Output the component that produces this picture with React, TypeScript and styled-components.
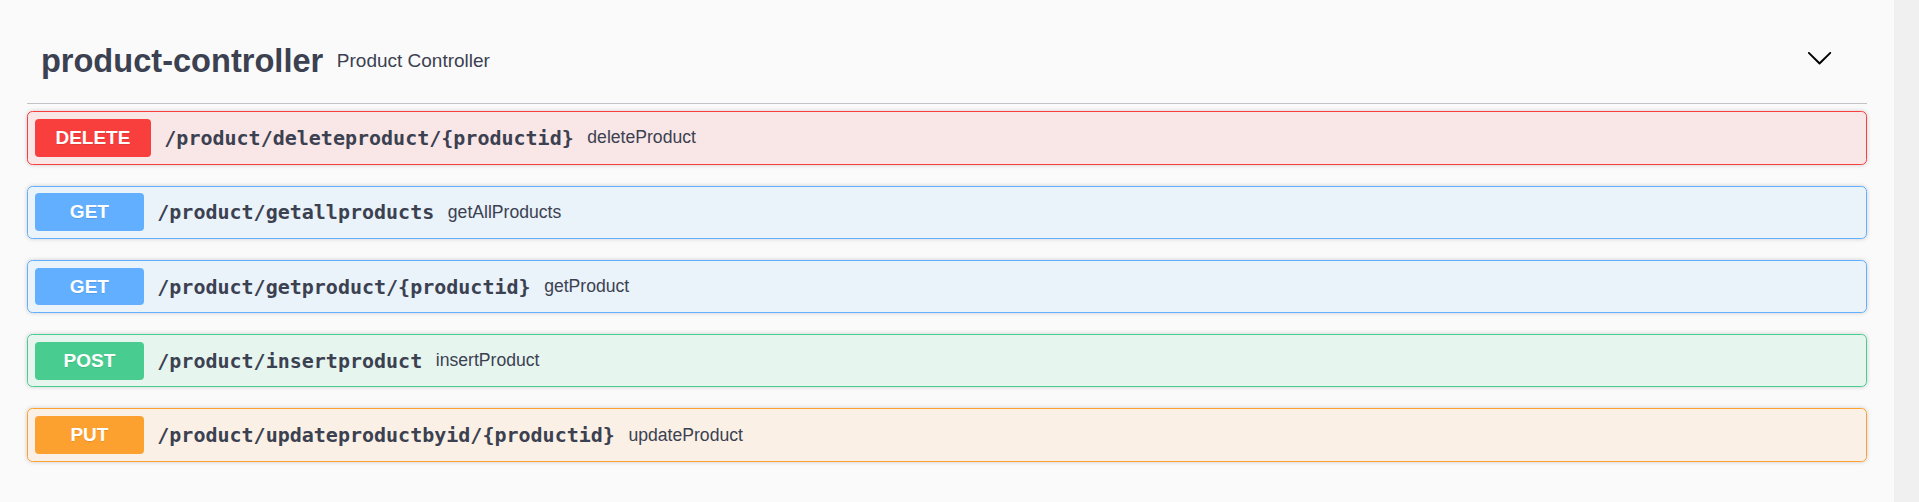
import styled, { createGlobalStyle } from "styled-components";

const GlobalStyle = createGlobalStyle`
  html, body {
    margin: 0;
    padding: 0;
    background: #fafafa;
  }
`;

const Page = styled.div`
  display: flex;
  height: 502px;
  overflow: hidden;
`;

const Main = styled.div`
  flex: 1;
  background: #fafafa;
  padding: 19px 27.3px 0;
`;

const Gutter = styled.div`
  width: 25px;
  background: #f0f0f0;
`;

const Tag = styled.div`
  display: flex;
  align-items: center;
  height: 84px;
  padding: 0 33.7px 0 13.6px;
  border-bottom: 1px solid rgba(59, 65, 81, 0.3);
  margin-bottom: 7.3px;
  color: #3b4151;
  font-family: "Liberation Sans", Arial, sans-serif;
`;

const TagName = styled.span`
  font-size: 32.6px;
  font-weight: 700;
`;

const TagDesc = styled.small`
  flex: 1;
  padding: 0 13.6px;
  font-size: 19px;
`;

const Toggle = styled.button`
  display: flex;
  padding: 0;
  margin-bottom: 6px;
  border: none;
  background: none;
  cursor: pointer;
`;

const methodColors = {
  DELETE: "#f93e3e",
  GET: "#61affe",
  POST: "#49cc90",
  PUT: "#fca130",
};

type Method = keyof typeof methodColors;

const hexToRgba = (hex: string, a: number) => {
  const n = parseInt(hex.slice(1), 16);
  return `rgba(${(n >> 16) & 255}, ${(n >> 8) & 255}, ${n & 255}, ${a})`;
};

const Opblock = styled.div<{ $method: Method }>`
  display: flex;
  align-items: center;
  padding: 6.8px;
  margin-bottom: 21px;
  border: 1px solid ${(p) => methodColors[p.$method]};
  border-radius: 5.4px;
  background: ${(p) => hexToRgba(methodColors[p.$method], 0.1)};
  box-shadow: 0 0 4px rgba(0, 0, 0, 0.19);
`;

const Badge = styled.span<{ $method: Method }>`
  box-sizing: border-box;
  min-width: 108.6px;
  padding: 8.1px 20.35px;
  border-radius: 4px;
  background: ${(p) => methodColors[p.$method]};
  color: #fff;
  text-align: center;
  text-shadow: 0 1px 0 rgba(0, 0, 0, 0.1);
  font-family: "Liberation Sans", Arial, sans-serif;
  font-size: 19px;
  font-weight: 700;
  line-height: 21.5px;
`;

const Path = styled.span`
  padding: 0 13.6px;
  color: #3b4151;
  font-family: "DejaVu Sans Mono", monospace;
  font-size: 20px;
  font-weight: 700;
`;

const Summary = styled.span`
  color: #3b4151;
  font-family: "Liberation Sans", Arial, sans-serif;
  font-size: 17.6px;
`;

const ops: { method: Method; path: string; summary: string }[] = [
  { method: "DELETE", path: "/product/deleteproduct/{productid}", summary: "deleteProduct" },
  { method: "GET", path: "/product/getallproducts", summary: "getAllProducts" },
  { method: "GET", path: "/product/getproduct/{productid}", summary: "getProduct" },
  { method: "POST", path: "/product/insertproduct", summary: "insertProduct" },
  { method: "PUT", path: "/product/updateproductbyid/{productid}", summary: "updateProduct" },
];

export default function App() {
  return (
    <>
      <GlobalStyle />
      <Page>
        <Main>
          <Tag>
            <TagName>product-controller</TagName>
            <TagDesc>Product Controller</TagDesc>
            <Toggle aria-label="collapse">
              <svg width="27.14" height="27.14" viewBox="0 0 20 20">
                <path d="M17.418 6.109c.272-.268.709-.268.979 0s.271.701 0 .969l-7.908 7.83c-.27.268-.707.268-.979 0l-7.908-7.830c-.27-.268-.27-.701 0-.969.271-.268.709-.268.979 0L10 13.25l7.418-7.141z" />
              </svg>
            </Toggle>
          </Tag>
          {ops.map((op) => (
            <Opblock key={op.path} $method={op.method}>
              <Badge $method={op.method}>{op.method}</Badge>
              <Path>{op.path}</Path>
              <Summary>{op.summary}</Summary>
            </Opblock>
          ))}
        </Main>
        <Gutter />
      </Page>
    </>
  );
}
